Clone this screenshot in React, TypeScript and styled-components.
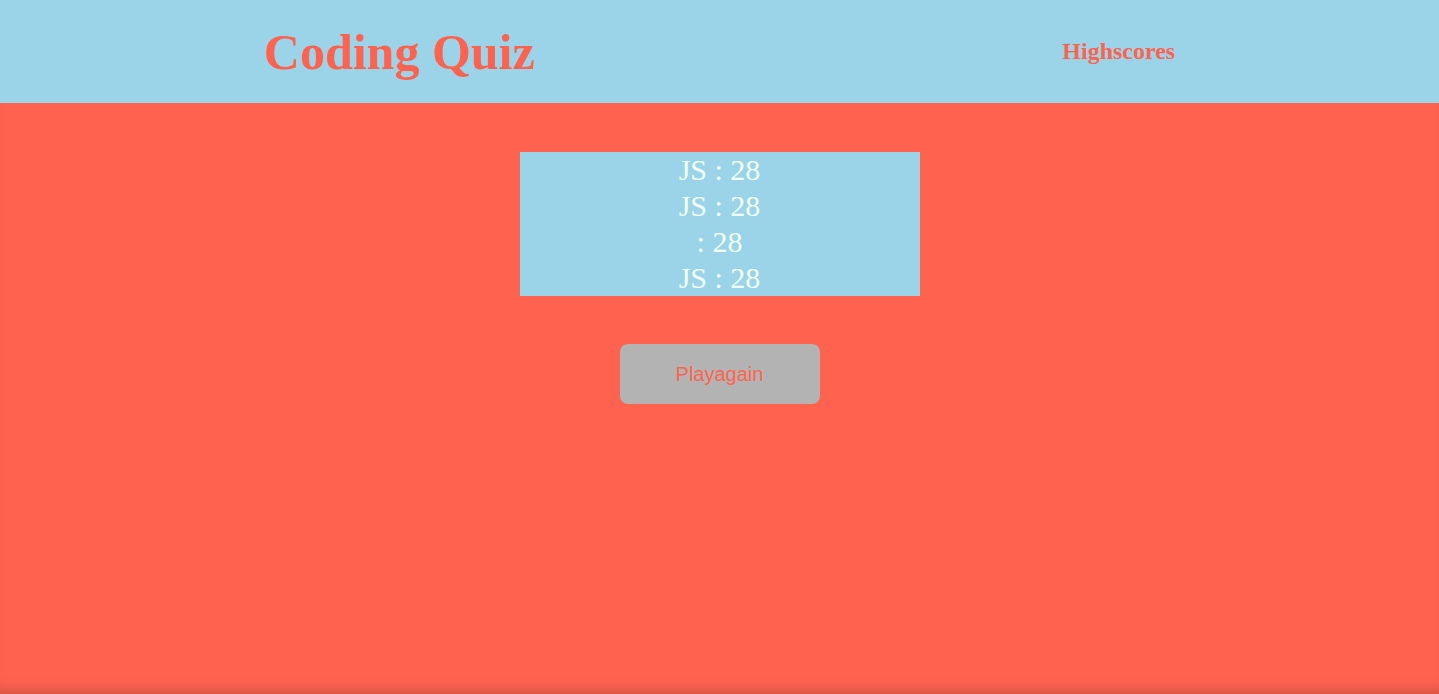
import React from "react";
import styled, { createGlobalStyle } from "styled-components";

const TOMATO = "#ff6350";
const SKY = "#9bd4e8";

const Global = createGlobalStyle`
  html, body { margin: 0; padding: 0; height: 100%; }
  body { background: ${TOMATO}; font-family: "Liberation Serif", "Times New Roman", serif; }
  #root { min-height: 100%; }
`;

const Page = styled.div`
  min-height: 100vh;
  display: flex;
  flex-direction: column;
  background: ${TOMATO};
  box-shadow: inset 0 -14px 16px -12px rgba(0, 0, 0, 0.22);
`;

const Header = styled.header`
  height: 103px;
  background: ${SKY};
  display: flex;
  align-items: center;
  justify-content: space-around;
`;

const Title = styled.h1`
  margin: 0;
  font-size: 50px;
  font-weight: bold;
  color: ${TOMATO};
  font-family: "Liberation Serif", serif;
`;

const NavLink = styled.a`
  font-size: 24px;
  font-weight: bold;
  color: ${TOMATO};
  text-decoration: none;
  font-family: "Liberation Serif", serif;
  cursor: pointer;
`;

const Main = styled.main`
  display: flex;
  flex-direction: column;
  align-items: center;
  padding-top: 49px;
  gap: 48px;
`;

const ScoreList = styled.ul`
  list-style: none;
  margin: 0;
  padding: 0;
  width: 400px;
  background: ${SKY};
`;

const ScoreItem = styled.li`
  text-align: center;
  font-size: 30px;
  line-height: 36px;
  color: #f0fff0;
  font-family: "Liberation Serif", serif;
`;

const PlayButton = styled.button`
  width: 200px;
  height: 60px;
  border: none;
  border-radius: 8px;
  background: #b3b3b3;
  color: ${TOMATO};
  font-family: "Liberation Sans", Arial, sans-serif;
  font-size: 20px;
  cursor: pointer;
`;

const scores = [
  { name: "JS", score: 28 },
  { name: "JS", score: 28 },
  { name: "", score: 28 },
  { name: "JS", score: 28 },
];

export default function App() {
  return (
    <>
      <Global />
      <Page>
        <Header>
          <Title>Coding Quiz</Title>
          <NavLink>Highscores</NavLink>
        </Header>
        <Main>
          <ScoreList>
            {scores.map((s, i) => (
              <ScoreItem key={i}>
                {s.name} : {s.score}
              </ScoreItem>
            ))}
          </ScoreList>
          <PlayButton>Playagain</PlayButton>
        </Main>
      </Page>
    </>
  );
}
